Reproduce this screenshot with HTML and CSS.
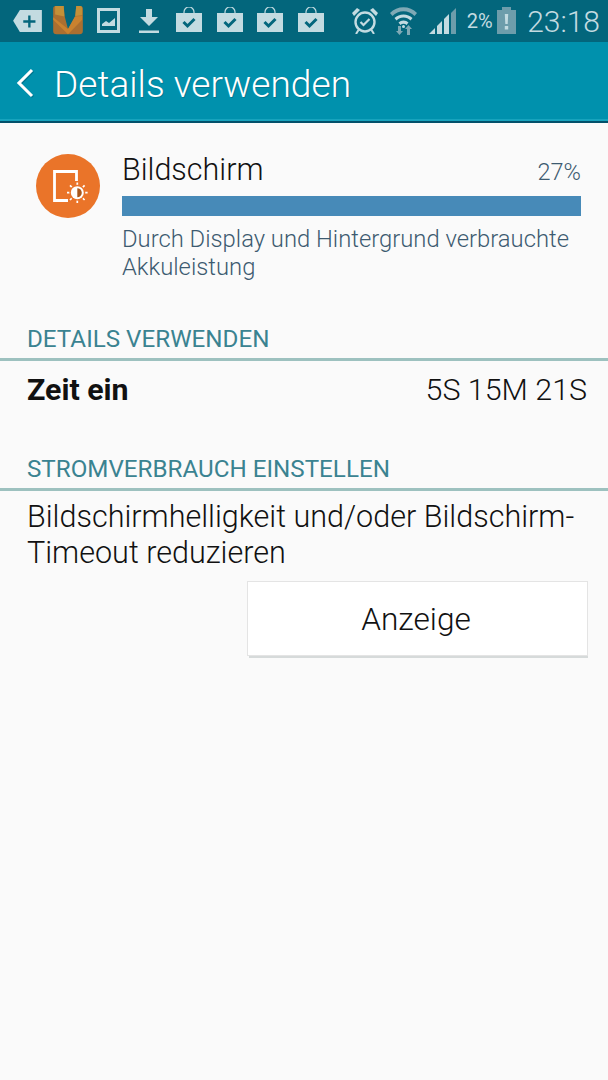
FILE: index.html
```html
<!DOCTYPE html>
<html lang="de">
<head>
<meta charset="utf-8">
<title>Details verwenden</title>
<link rel="stylesheet" href="styles.css">
</head>
<body>
<div class="status">
  <svg class="ic i1" viewBox="40 30 85 65"><path d="M40 62 60 30h65v65H60z" fill="#c3dbe1"/><path d="M70 64h36M88 46v36" stroke="#03667c" stroke-width="7" fill="none"/></svg>
  <svg class="ic i2" viewBox="160 18 90 88"><path d="M160 26q0-8 8-8h24l3 32 10 38 22-38 3-32h12q8 0 8 8v68q0 10-10 10H170q-10 0-10-10z" fill="#ab6f30"/><path d="M160 52l45 36 21-38 22-2v12l-43 44-45-44z" fill="#c9822f"/><path d="M166 18h26l2 32-28-6z" fill="#c39038"/><path d="M230 18h12q6 0 6 6v22l-21 2z" fill="#c39038"/></svg>
  <svg class="ic i3" viewBox="0 0 23 25"><rect x="1.500" y="1.500" width="20" height="22" fill="none" stroke="#c3dbe1" stroke-width="3"/><path d="M5 18v-2l4-3 3 2 6-5v8z" fill="#c3dbe1"/></svg>
  <svg class="ic i4" viewBox="0 0 20 24"><path d="M7 0h6v8h6l-9 9-9-9h6zM0 21.500h20V24H0z" fill="#c3dbe1"/></svg>
  <svg class="ic i5" viewBox="0 0 26 25"><path d="M8 6V5a5 5 0 0 1 10 0v1" fill="none" stroke="#c3dbe1" stroke-width="1.200"/><path d="M0 6h26v19H0z" fill="#c3dbe1"/><path d="M7.500 15l4 4 7-7" fill="none" stroke="#03667c" stroke-width="3"/></svg>
  <svg class="ic i5" viewBox="0 0 26 25"><path d="M8 6V5a5 5 0 0 1 10 0v1" fill="none" stroke="#c3dbe1" stroke-width="1.200"/><path d="M0 6h26v19H0z" fill="#c3dbe1"/><path d="M7.500 15l4 4 7-7" fill="none" stroke="#03667c" stroke-width="3"/></svg>
  <svg class="ic i5" viewBox="0 0 26 25"><path d="M8 6V5a5 5 0 0 1 10 0v1" fill="none" stroke="#c3dbe1" stroke-width="1.200"/><path d="M0 6h26v19H0z" fill="#c3dbe1"/><path d="M7.500 15l4 4 7-7" fill="none" stroke="#03667c" stroke-width="3"/></svg>
  <svg class="ic i5" viewBox="0 0 26 25"><path d="M8 6V5a5 5 0 0 1 10 0v1" fill="none" stroke="#c3dbe1" stroke-width="1.200"/><path d="M0 6h26v19H0z" fill="#c3dbe1"/><path d="M7.500 15l4 4 7-7" fill="none" stroke="#03667c" stroke-width="3"/></svg>
  <span class="spacer"></span>
  <svg class="ic i6" viewBox="0 0 26 26"><circle cx="13" cy="14" r="9.500" fill="none" stroke="#c3dbe1" stroke-width="2.400"/><path d="M8.500 14l3 3 6-6" fill="none" stroke="#c3dbe1" stroke-width="2.200"/><path d="M0 5l5-5 3 2-6 6zM26 5l-5-5-3 2 6 6z" fill="#c3dbe1"/><path d="M6.500 22l-2.500 4M19.500 22l2.500 4" stroke="#c3dbe1" stroke-width="2" fill="none"/></svg>
  <svg class="ic i7" viewBox="0 0 27 29"><path d="M0 7a19 19 0 0 1 27 0l-2.500 3a15 15 0 0 0-22 0z" fill="#7fa9b5"/><path d="M4.500 12a13 13 0 0 1 18 0l-2 2.500a9.500 9.500 0 0 0-14 0z" fill="#c3dbe1"/><path d="M8.500 16.500a7 7 0 0 1 10 0L16.500 19a4 4 0 0 0-6 0z" fill="#c3dbe1"/><circle cx="13.500" cy="20.500" r="1.500" fill="#c3dbe1"/><path d="M8 20h3v5h2l-3.500 4L6 25h2zM18.500 19l3.500 4h-2v6h-3v-6h-2z" fill="#7fa9b5"/></svg>
  <svg class="ic i8" viewBox="0 0 27 26"><path d="M0 26 6 20v6z" fill="#c3dbe1"/><path d="M8 18l5-5v13H8z" fill="#c3dbe1"/><path d="M15 11l5-5v20h-5z" fill="#c3dbe1"/><path d="M22 5l5-5v26h-5z" fill="#6d9dab"/></svg>
  <span class="pct">2%</span>
  <svg class="ic i9" viewBox="0 0 19 27"><path d="M5 0h9v3h5v24H0V3h5z" fill="#6d9dab"/><path d="M7.800 7h3.400l-.5 10H8.300zM7.800 19h3.400v3.500H7.800z" fill="#c3dbe1"/></svg>
  <span class="time">23:18</span>
</div>
<header class="bar">
  <svg class="back" viewBox="0 0 18 30"><path d="M16 2 3 15l13 13" fill="none" stroke="#fff" stroke-width="3.100"/></svg>
  <h1 class="title">Details verwenden</h1>
</header>
<main>
  <section class="summary">
    <span class="badge">
      <svg viewBox="0 0 64 64" class="badge-ic"><path d="M32 46.500H18.500v-29h22V27" fill="none" stroke="#fff" stroke-width="2.800"/><path d="M41.300 28.500v20.400M31 38.700h20.600M34 31.400l14.600 14.600M48.600 31.400 34 46" stroke="#fff" stroke-width="1.700"/><circle cx="41.300" cy="38.700" r="8" fill="#ea7429"/><circle cx="41.300" cy="38.700" r="6.500" fill="#fff"/><path d="M41.300 34.200a4.500 4.500 0 0 1 0 9z" fill="#a9571c"/></svg>
    </span>
    <div class="sum-body">
      <div class="sum-head"><span class="sum-name">Bildschirm</span><span class="sum-pct">27%</span></div>
      <div class="meter"></div>
      <p class="sum-desc">Durch Display und Hintergrund verbrauchte Akkuleistung</p>
    </div>
  </section>
  <h2 class="sec sec1">DETAILS VERWENDEN</h2>
  <div class="row"><strong class="row-k">Zeit ein</strong><span class="row-v">5S 15M 21S</span></div>
  <h2 class="sec sec2">STROMVERBRAUCH EINSTELLEN</h2>
  <p class="hint">Bildschirmhelligkeit und/oder Bildschirm-<br>Timeout reduzieren</p>
  <div class="actions"><button class="btn">Anzeige</button></div>
</main>
</body>
</html>
```
FILE: styles.css
```css
* { box-sizing: border-box; }
html, body { margin: 0; padding: 0; }
body {
  width: 608px; height: 1080px; overflow: hidden;
  background: #fafafa; color: #111;
  font-family: Roboto, "Liberation Sans", sans-serif; font-weight: 300;
}
.status {
  height: 42px; background: #03667c; display: flex; align-items: center;
  padding: 0 8px 0 13px; color: #c3dbe1;
}
.ic { display: block; flex: none; }
.i1 { width: 29px; height: 22px; margin-right: 11px; }
.i2 { width: 30px; height: 29px; margin-right: 14px; margin-top: -1px; }
.i3 { width: 23px; height: 25px; margin-right: 19px; margin-top: -1px; }
.i4 { width: 20px; height: 24px; margin-right: 17px; }
.i5 { width: 26px; height: 25px; margin-right: 14.500px; margin-top: -3px; }
.spacer { flex: 1; }
.i6 { width: 26px; height: 26px; margin-right: 12px; }
.i7 { width: 27px; height: 29px; margin-right: 12px; margin-top: -1px; }
.i8 { width: 27px; height: 26px; margin-right: 10.500px; }
.i9 { width: 19px; height: 27px; margin-left: 4.500px; margin-right: 11px; margin-top: -1px; }
.pct { font-size: 20px; font-weight: 400; }
.time { font-size: 30px; }
.bar {
  height: 81px; background: #0091ad; display: flex; align-items: center;
  border-bottom: 2px solid #02506a; box-shadow: inset 0 -2px 0 #17a3bd;
  padding: 5px 0 0 16px; color: #fff;
}
.back { width: 18px; height: 30px; margin-right: 20px; margin-top: -2px; filter: drop-shadow(1px 1px 0 rgba(0,60,80,.3)); }
.title { margin: 0; font-size: 37.100px; font-weight: 300; text-shadow: 1px 1px 0 rgba(0,60,80,.3); }
.summary { display: flex; padding: 31px 27px 0 36px; }
.badge {
  width: 64px; height: 64px; border-radius: 50%; background: #ea7429; flex: none; margin-right: 22px;
}
.badge-ic { width: 64px; height: 64px; display: block; }
.sum-body { flex: 1; }
.sum-head { display: flex; justify-content: space-between; align-items: baseline; height: 42px; }
.sum-name { font-size: 30.500px; line-height: 32px; }
.sum-pct { font-size: 23.500px; color: #3d5a70; }
.meter { height: 20px; background: #478ab8; }
.sum-desc { margin: 9px 0 0; font-size: 23.800px; line-height: 28px; color: #3d5a70; }
.sec {
  margin: 0; font-size: 24.200px; font-weight: 400; color: #3a8391; line-height: 26px;
  padding: 0 0 6px 27px; border-bottom: 3px solid #9dc1bf;
}
.sec1 { margin-top: 45px; }
.sec2 { margin-top: 32px; }
.row {
  display: flex; justify-content: space-between;
  padding: 11px 21px 0 27px; height: 63px; align-items: flex-start;
  font-size: 30.300px; color: #111;
}
.row-k { font-weight: 700; }
.row-v { font-weight: 300; font-size: 30.400px; }
.hint { margin: 8px 0 0; padding: 0 20px 0 27px; font-size: 30.550px; line-height: 36px; }
.actions { display: flex; justify-content: flex-end; padding: 10px 20px 0 0; }
.btn {
  width: 341px; height: 75px; background: #fff; border: 1px solid #e4e4e4;
  box-shadow: 1px 3px 0 -1px #d6dada; font: 300 31.600px Roboto, sans-serif; color: #111; padding: 2px 3px 0 0;
}
```
